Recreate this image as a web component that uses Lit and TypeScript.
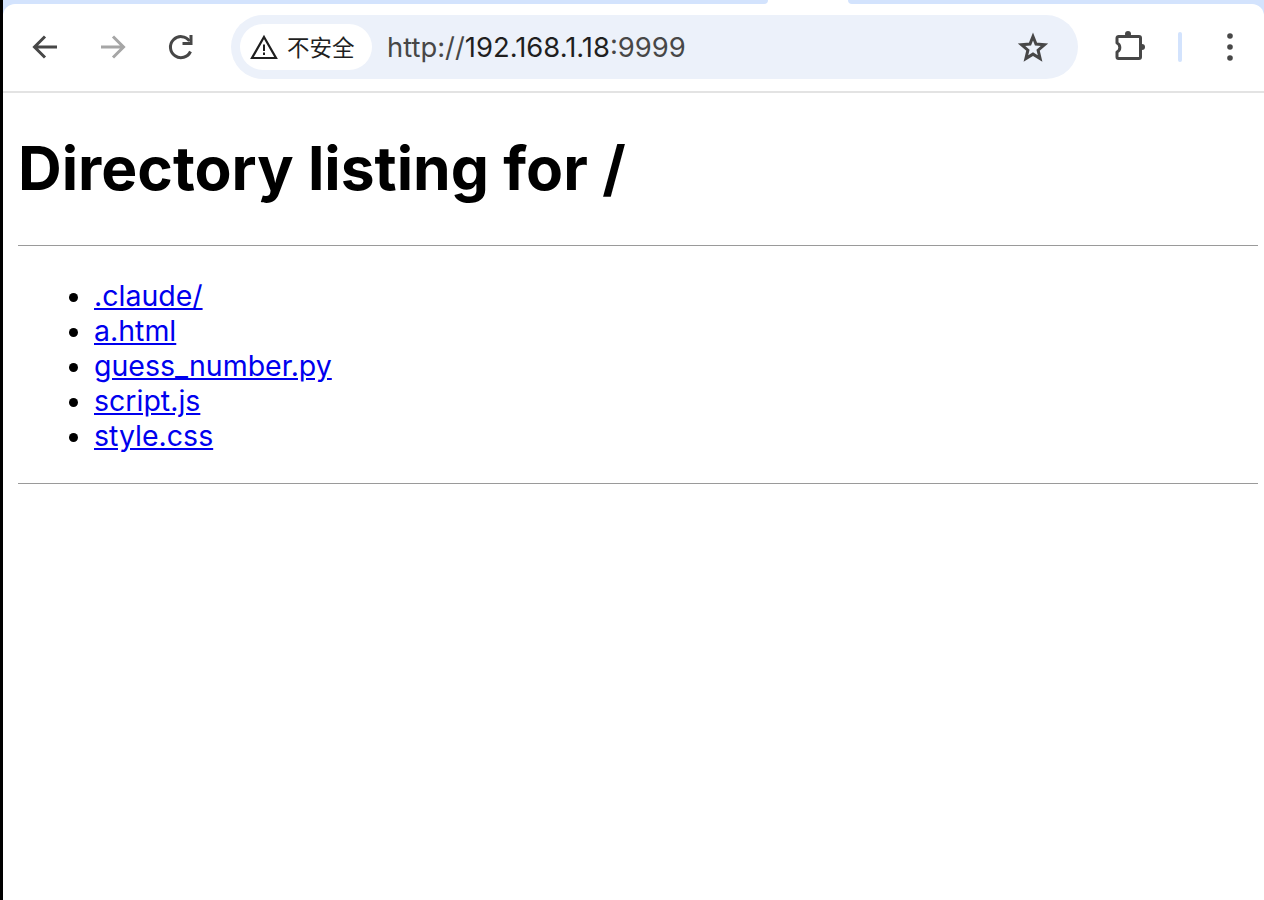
import { LitElement, html, css } from 'lit';
import { customElement } from 'lit/decorators.js';

const files = ['.claude/', 'a.html', 'guess_number.py', 'script.js', 'style.css'];

@customElement('app-root')
export class AppRoot extends LitElement {
  static styles = css`
    :host {
      display: block;
      min-height: 900px;
      background: #fff;
      font-family: Inter, 'Noto Sans CJK SC', sans-serif;
      overflow: hidden;
    }
    .frame {
      display: flex;
      min-height: 900px;
    }
    .edge {
      width: 3px;
      flex: none;
      background: #000;
    }
    .main {
      flex: 1;
      min-width: 0;
    }
    .chrome {
      background: #d3e3fd;
    }
    /* strip of tabs, only its bottom 4px is in view */
    .tabs {
      display: flex;
      height: 4px;
      background: #fff;
    }
    .tab-left {
      width: 765px;
      background: #d3e3fd;
      border-bottom-right-radius: 6px;
    }
    .tab-active {
      width: 80px;
    }
    .tab-right {
      flex: 1;
      background: #d3e3fd;
      border-bottom-left-radius: 6px;
    }
    .toolbar {
      display: flex;
      align-items: center;
      height: 89px;
      padding: 0 0 3px 8px;
      background: #fff;
      border-radius: 12px 12px 0 0;
      box-shadow: inset 0 -2px 0 #e3e3e3;
      box-sizing: border-box;
    }
    .btn {
      width: 68px;
      height: 48px;
      display: flex;
      align-items: center;
      justify-content: center;
      flex: none;
    }
    .btn svg {
      width: 32px;
      height: 32px;
      display: block;
    }
    .omnibox {
      width: 847px;
      height: 64px;
      margin-left: 16px;
      flex: none;
      display: flex;
      align-items: center;
      padding: 0 29px 0 9px;
      box-sizing: border-box;
      background: #ecf1fa;
      border-radius: 32px;
    }
    .chip {
      display: flex;
      align-items: center;
      gap: 9px;
      height: 46px;
      padding: 0 18px 0 10px;
      background: #fff;
      border-radius: 23px;
      color: #1f1f1f;
      font-size: 22.5px;
      box-sizing: border-box;
      width: 132px;
      white-space: nowrap;
    }
    .chip svg {
      width: 28px;
      height: 28px;
      flex: none;
    }
    .chip span {
      padding-bottom: 2px;
    }
    .url {
      flex: 1;
      margin-left: 15px;
      font-size: 27.4px;
      color: #1f1f1f;
      white-space: nowrap;
    }
    .url span {
      color: #474747;
    }
    .star {
      width: 32px;
      height: 32px;
      flex: none;
    }
    .ext {
      margin-left: 17px;
    }
    .divider {
      width: 4px;
      height: 30px;
      margin: 0 14px 0 15px;
      background: #d3e3fd;
      border-radius: 2px;
      flex: none;
    }
    .page {
      padding: 0 6px 0 15px;
      color: #000;
    }
    h1 {
      margin: 0;
      padding-top: 38px;
      font-size: 60.5px;
      line-height: 75px;
      font-weight: 700;
      white-space: nowrap;
    }
    hr {
      margin: 0;
      border: none;
      height: 1px;
      background: #9a9a9a;
    }
    .rule-top {
      margin-top: 39px;
    }
    ul {
      margin: 32px 0 30px;
      padding: 0 0 0 76px;
      font-size: 28.5px;
      line-height: 35px;
    }
    a {
      color: #0000ee;
      text-decoration: underline;
    }
  `;

  render() {
    return html`
      <div class="frame">
        <div class="edge"></div>
        <div class="main">
          <div class="chrome">
            <div class="tabs">
              <div class="tab-left"></div>
              <div class="tab-active"></div>
              <div class="tab-right"></div>
            </div>
            <div class="toolbar">
              <div class="btn">
                <svg viewBox="0 0 32 32" fill="none" stroke="#474747" stroke-width="3">
                  <path d="M28 16H6M16 5.500 5.500 16 16 26.500" />
                </svg>
              </div>
              <div class="btn">
                <svg viewBox="0 0 32 32" fill="none" stroke="#a6a6a6" stroke-width="3">
                  <path d="M4 16h22M16 5.500 26.500 16 16 26.500" />
                </svg>
              </div>
              <div class="btn">
                <svg viewBox="0 0 32 32" fill="none" stroke="#474747" stroke-width="3">
                  <path d="M25.500 20.500A10.500 10.500 0 1 1 24.500 10" />
                  <path d="M26 4v8.500h-8.500" />
                </svg>
              </div>
              <div class="omnibox">
                <div class="chip">
                  <svg viewBox="0 0 28 28">
                    <path d="M14 4 26 25H2Z" fill="none" stroke="#1f1f1f" stroke-width="2.200" />
                    <path d="M14 11.500v6.500M14 19.500v2.500" stroke="#1f1f1f" stroke-width="2" />
                  </svg>
                  <span>不安全</span>
                </div>
                <div class="url"><span>http://</span>192.168.1.18<span>:9999</span></div>
                <svg class="star" viewBox="0 0 32 32" fill="none" stroke="#474747" stroke-width="3">
                  <path d="M16 5.500 19 13l8.500.7-6.400 5.500 2 8.300L16 23.100 8.900 27.500l2-8.300-6.400-5.500L13 13Z" />
                </svg>
              </div>
              <div class="btn ext">
                <svg viewBox="0 0 32 32">
                  <path d="M6 5.500H26a1.500 1.500 0 0 1 1.500 1.500V26a1.500 1.500 0 0 1-1.500 1.500H5.500a1.500 1.500 0 0 1-1.500-1.500V21a5 5 0 0 0 0-9V7a1.500 1.500 0 0 1 2-1.500Z" fill="none" stroke="#474747" stroke-width="3" stroke-linejoin="round" />
                  <circle cx="15" cy="3" r="3" fill="#474747" />
                  <circle cx="29" cy="16" r="3" fill="#474747" />
                </svg>
              </div>
              <div class="divider"></div>
              <div class="btn">
                <svg viewBox="0 0 32 32" fill="#474747">
                  <circle cx="16" cy="5" r="2.800" />
                  <circle cx="16" cy="16" r="2.800" />
                  <circle cx="16" cy="27" r="2.800" />
                </svg>
              </div>
            </div>
          </div>
          <div class="page">
            <h1>Directory listing for /</h1>
            <hr class="rule-top" />
            <ul>
              ${files.map(f => html`<li><a href="#">${f}</a></li>`)}
            </ul>
            <hr />
          </div>
        </div>
      </div>
    `;
  }
}
